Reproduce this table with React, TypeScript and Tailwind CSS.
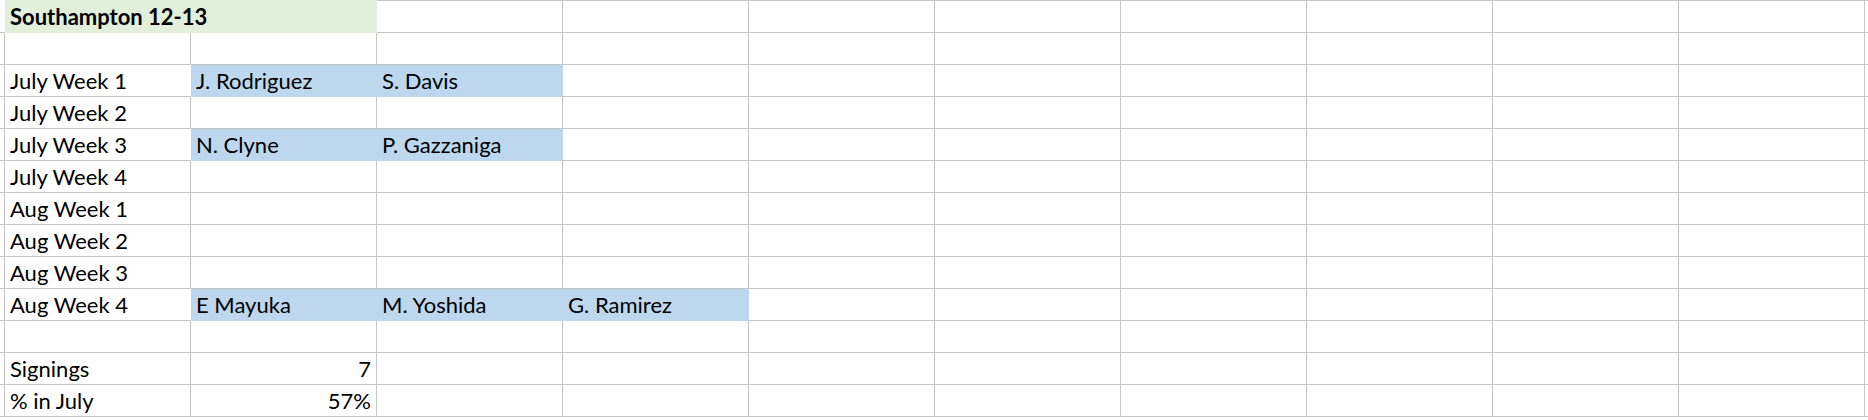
import React from "react";

type Cell = { text?: string; fill?: "green" | "blue"; bold?: boolean; right?: boolean; span?: number };

const COLS = 10;

const rows: Cell[][] = [
  [{ text: "Southampton 12-13", fill: "green", bold: true, span: 2 }],
  [],
  [{ text: "July Week 1" }, { text: "J. Rodriguez", fill: "blue" }, { text: "S. Davis", fill: "blue" }],
  [{ text: "July Week 2" }],
  [{ text: "July Week 3" }, { text: "N. Clyne", fill: "blue" }, { text: "P. Gazzaniga", fill: "blue" }],
  [{ text: "July Week 4" }],
  [{ text: "Aug Week 1" }],
  [{ text: "Aug Week 2" }],
  [{ text: "Aug Week 3" }],
  [
    { text: "Aug Week 4" },
    { text: "E Mayuka", fill: "blue" },
    { text: "M. Yoshida", fill: "blue" },
    { text: "G. Ramirez", fill: "blue" },
  ],
  [],
  [{ text: "Signings" }, { text: "7", right: true }],
  [{ text: "% in July" }, { text: "57%", right: true }],
];

// pad every row out to the full column count
function expand(row: Cell[]): Cell[] {
  const out: Cell[] = [];
  row.forEach((c) => out.push(c));
  let used = row.reduce((n, c) => n + (c.span ?? 1), 0);
  while (used < COLS) {
    out.push({});
    used++;
  }
  return out;
}

function Row({ cells, first }: { cells: Cell[]; first: boolean }) {
  const h = first ? "h-[33px] border-t" : "h-8";
  const firstFilled = !!cells[0].fill;
  return (
    <>
      <div
        className={`${h} border-b border-r border-b-[#c6c6c6] ${
          firstFilled ? "border-r-white border-t-white" : "border-r-[#c6c6c6] border-t-[#c6c6c6]"
        }`}
      />
      {cells.map((c, i) => {
        const next = cells[i + 1];
        const bg = c.fill === "green" ? "bg-[#e2efda]" : c.fill === "blue" ? "bg-[#bdd7ee]" : "bg-white";
        const borderB = c.fill === "green" ? "border-b-[#e2efda]" : c.fill === "blue" ? "border-b-[#bdd7ee]" : "border-b-[#c6c6c6]";
        const borderT = c.fill === "green" ? "border-t-[#e2efda]" : "border-t-[#c6c6c6]";
        const borderR =
          c.fill === "green"
            ? "border-r-[#e2efda]"
            : c.fill === "blue"
            ? "border-r-[#bdd7ee]"
            : next?.fill
            ? "border-r-white"
            : "border-r-[#c6c6c6]";
        return (
          <div
            key={i}
            className={`${h} ${c.span === 2 ? "col-span-2" : ""} border-b border-r ${borderB} ${borderR} ${borderT} ${bg} overflow-visible whitespace-nowrap px-[5px] leading-[31px] ${
              c.bold ? "font-bold" : ""
            } ${c.right ? "text-right" : ""}`}
          >
            {c.text}
          </div>
        );
      })}
      <div className={`${h} border-b border-b-[#c6c6c6] border-t-[#c6c6c6]`} />
    </>
  );
}

export default function App() {
  return (
    <div className="h-[420px] w-[1868px] overflow-hidden bg-white font-['Lato',sans-serif] text-[22px] text-black">
      <div className="grid grid-cols-[5px_repeat(10,186px)_1fr]">
        {rows.map((r, i) => (
          <Row key={i} cells={expand(r)} first={i === 0} />
        ))}
      </div>
    </div>
  );
}
